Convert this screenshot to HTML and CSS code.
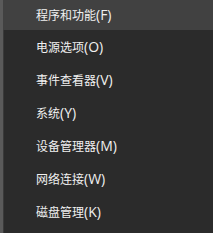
FILE: index.html
```html
<!DOCTYPE html>
<html lang="zh-CN">
<head>
    <meta charset="UTF-8">
    <title>菜单</title>
    <link rel="stylesheet" href="styles.css">
</head>
<body>
    <div class="menu">
        <div class="menu-item active">程序和功能<span class="key">(F)</span></div>
        <div class="menu-item">电源选项<span class="key">(O)</span></div>
        <div class="menu-item">事件查看器<span class="key">(V)</span></div>
        <div class="menu-item">系统<span class="key">(Y)</span></div>
        <div class="menu-item">设备管理器<span class="key">(M)</span></div>
        <div class="menu-item">网络连接<span class="key">(W)</span></div>
        <div class="menu-item">磁盘管理<span class="key">(K)</span></div>
    </div>
</body>
</html>
```

FILE: styles.css
```css
html, body {
    margin: 0;
    padding: 0;
    background-color: #2b2b2b;
}
.menu {
    width: 213px;
    height: 233px;
    box-sizing: border-box;
    border-left: 3px solid #5a5a5a;
    box-shadow: inset 1px 0 0 #3a3a3a;
    font-family: "Noto Sans CJK SC", sans-serif;
    font-size: 12px;
    color: #f0f0f0;
}
.menu-item {
    height: 33px;
    line-height: 33px;
    padding-left: 33px;
    white-space: nowrap;
}
.menu-item.active {
    height: 30px;
    line-height: 30px;
    background-color: #414141;
}
.key {
    font-family: "Open Sans", sans-serif;
    font-size: 14px;
}
```
